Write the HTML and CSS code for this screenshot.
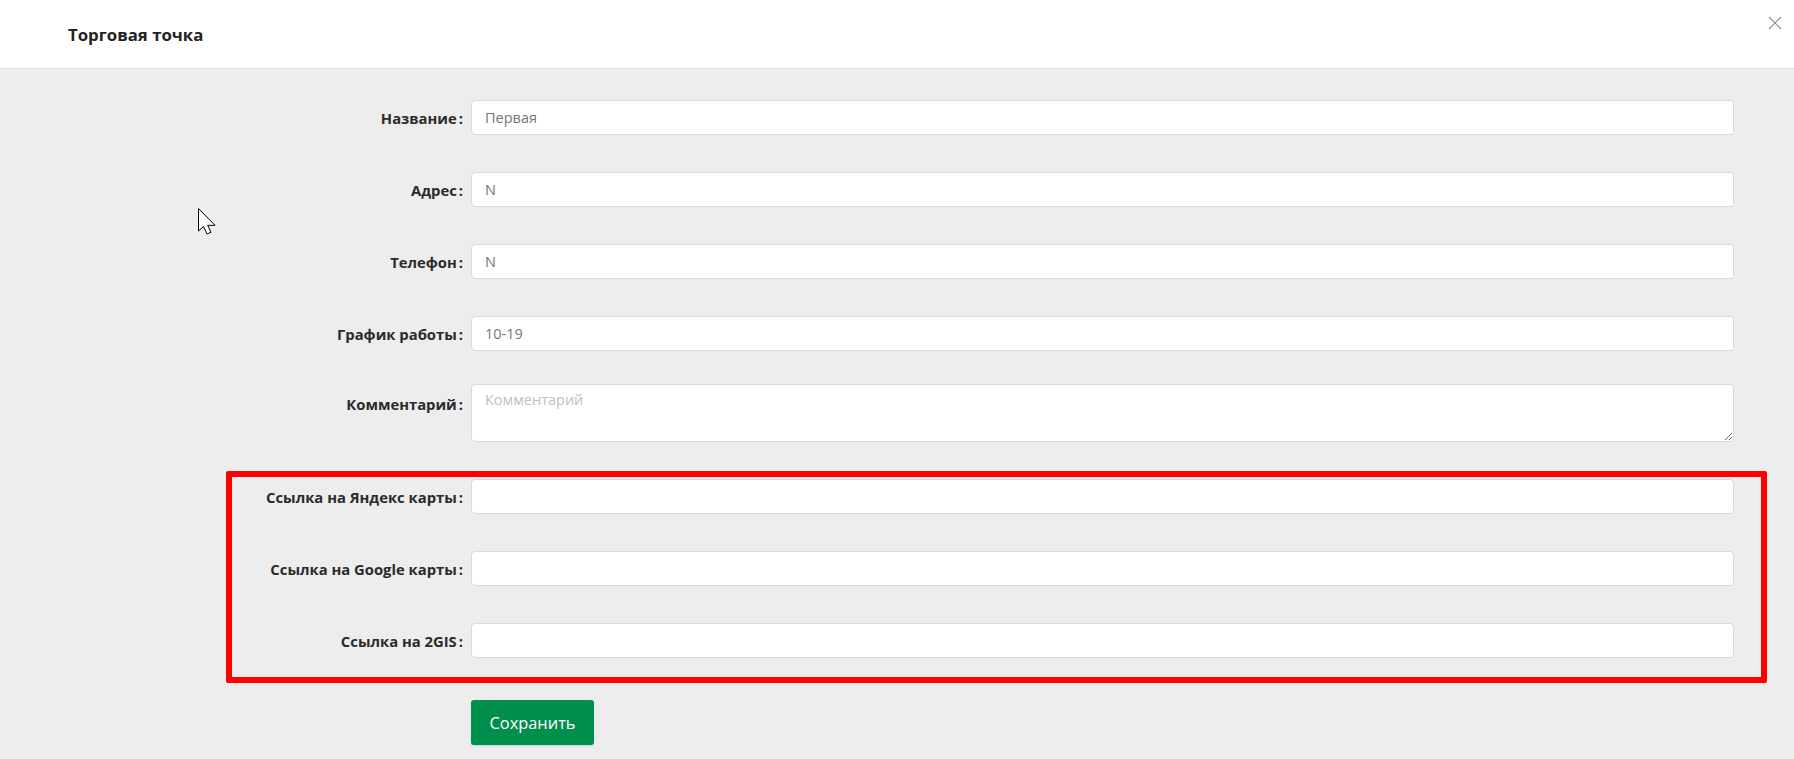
FILE: index.html
```html
<!DOCTYPE html>
<html lang="ru">
<head>
<meta charset="utf-8">
<title>Торговая точка</title>
<link rel="stylesheet" href="styles.css">
</head>
<body>
<div class="modal">
  <header class="modal-header">
    <h1 class="modal-title">Торговая точка</h1>
    <button class="close-btn" aria-label="Закрыть">
      <svg width="14" height="14" viewBox="0 0 14 14"><path d="M1 1 L13 13 M13 1 L1 13" stroke="#8c8c8c" stroke-width="1.1" fill="none"/></svg>
    </button>
  </header>
  <form class="modal-body">
    <div class="row">
      <label class="label">Название</label>
      <input class="input" type="text" value="Первая">
    </div>
    <div class="row">
      <label class="label">Адрес</label>
      <input class="input" type="text" value="N">
    </div>
    <div class="row">
      <label class="label">Телефон</label>
      <input class="input" type="text" value="N">
    </div>
    <div class="row">
      <label class="label">График работы</label>
      <input class="input" type="text" value="10-19">
    </div>
    <div class="row row-textarea">
      <label class="label label-top">Комментарий</label>
      <textarea class="textarea" placeholder="Комментарий"></textarea>
    </div>
    <div class="links-group">
      <div class="row">
        <label class="label">Ссылка на Яндекс карты</label>
        <input class="input" type="text">
      </div>
      <div class="row">
        <label class="label">Ссылка на Google карты</label>
        <input class="input" type="text">
      </div>
      <div class="row">
        <label class="label">Ссылка на 2GIS</label>
        <input class="input" type="text">
      </div>
    </div>
    <div class="row row-actions">
      <span></span>
      <div><button type="button" class="save-btn">Сохранить</button></div>
    </div>
  </form>
  <svg class="cursor" width="20" height="28" viewBox="0 0 20 28"><path d="M0.5 0.5 L0.5 23 L5.5 18.5 L9 26 L13 24.3 L9.7 17.3 L17 17.3 Z" fill="#fff" stroke="#000" stroke-width="1" stroke-linejoin="miter"/></svg>
</div>
</body>
</html>
```
FILE: styles.css
```css
* { box-sizing: border-box; }
html, body {
  margin: 0;
  padding: 0;
  height: 759px;
  overflow: hidden;
}
body {
  background: #ededed;
  font-family: "Open Sans", "Noto Sans", sans-serif;
  color: #262626;
}
.modal {
  position: relative;
  height: 759px;
}
.modal-header {
  height: 69px;
  background: #fff;
  border-bottom: 1px solid #e3e3e3;
  display: flex;
  align-items: center;
  justify-content: space-between;
  padding: 0 0 0 68px;
}
.modal-title {
  margin: 0;
  font-size: 16.8px;
  font-weight: 700;
  color: #222;
}
.close-btn {
  align-self: flex-start;
  margin: 16px 12px 0 0;
  width: 14px;
  height: 14px;
  padding: 0;
  border: 0;
  background: none;
  display: block;
}
.close-btn svg { display: block; }
.modal-body {
  display: flex;
  flex-direction: column;
  gap: 37px;
  padding: 31px 60px 0 0;
}
.row {
  display: grid;
  grid-template-columns: 463px 1fr;
  column-gap: 8px;
  align-items: center;
}
.label {
  text-align: right;
  font-size: 14.8px;
  font-weight: 700;
  color: #2b2b2b;
  white-space: nowrap;
}
.label::after {
  content: ":";
  margin-left: 2px;
}
.label-top {
  align-self: start;
  padding-top: 10px;
}
.input, .textarea {
  width: 100%;
  height: 35px;
  border: 1px solid #d9d9d9;
  border-radius: 4px;
  background: #fff;
  padding: 0 13px;
  font-family: "Open Sans", "Noto Sans", sans-serif;
  font-size: 14.5px;
  color: #757575;
  outline: none;
}
.row-textarea { margin-top: -4px; }
.textarea {
  height: 58px;
  padding: 5px 13px;
  resize: vertical;
  display: block;
}
.textarea::placeholder { color: #bfbfbf; }
.links-group {
  position: relative;
  display: flex;
  flex-direction: column;
  gap: 37px;
}
.links-group::before {
  content: "";
  position: absolute;
  left: 226px;
  right: -33px;
  top: -8px;
  bottom: -25px;
  border: 6px solid #ff0000;
  border-radius: 2px;
  pointer-events: none;
}
.row-actions { margin-top: 5px; }
.save-btn {
  width: 123px;
  height: 45px;
  border: 0;
  border-radius: 3px;
  background: #008f4c;
  color: #fff;
  font-family: "Open Sans", "Noto Sans", sans-serif;
  font-size: 16.4px;
  box-shadow: 0 1px 2px rgba(0,0,0,0.12);
  display: block;
}
.cursor {
  position: absolute;
  left: 198px;
  top: 208px;
}
```
